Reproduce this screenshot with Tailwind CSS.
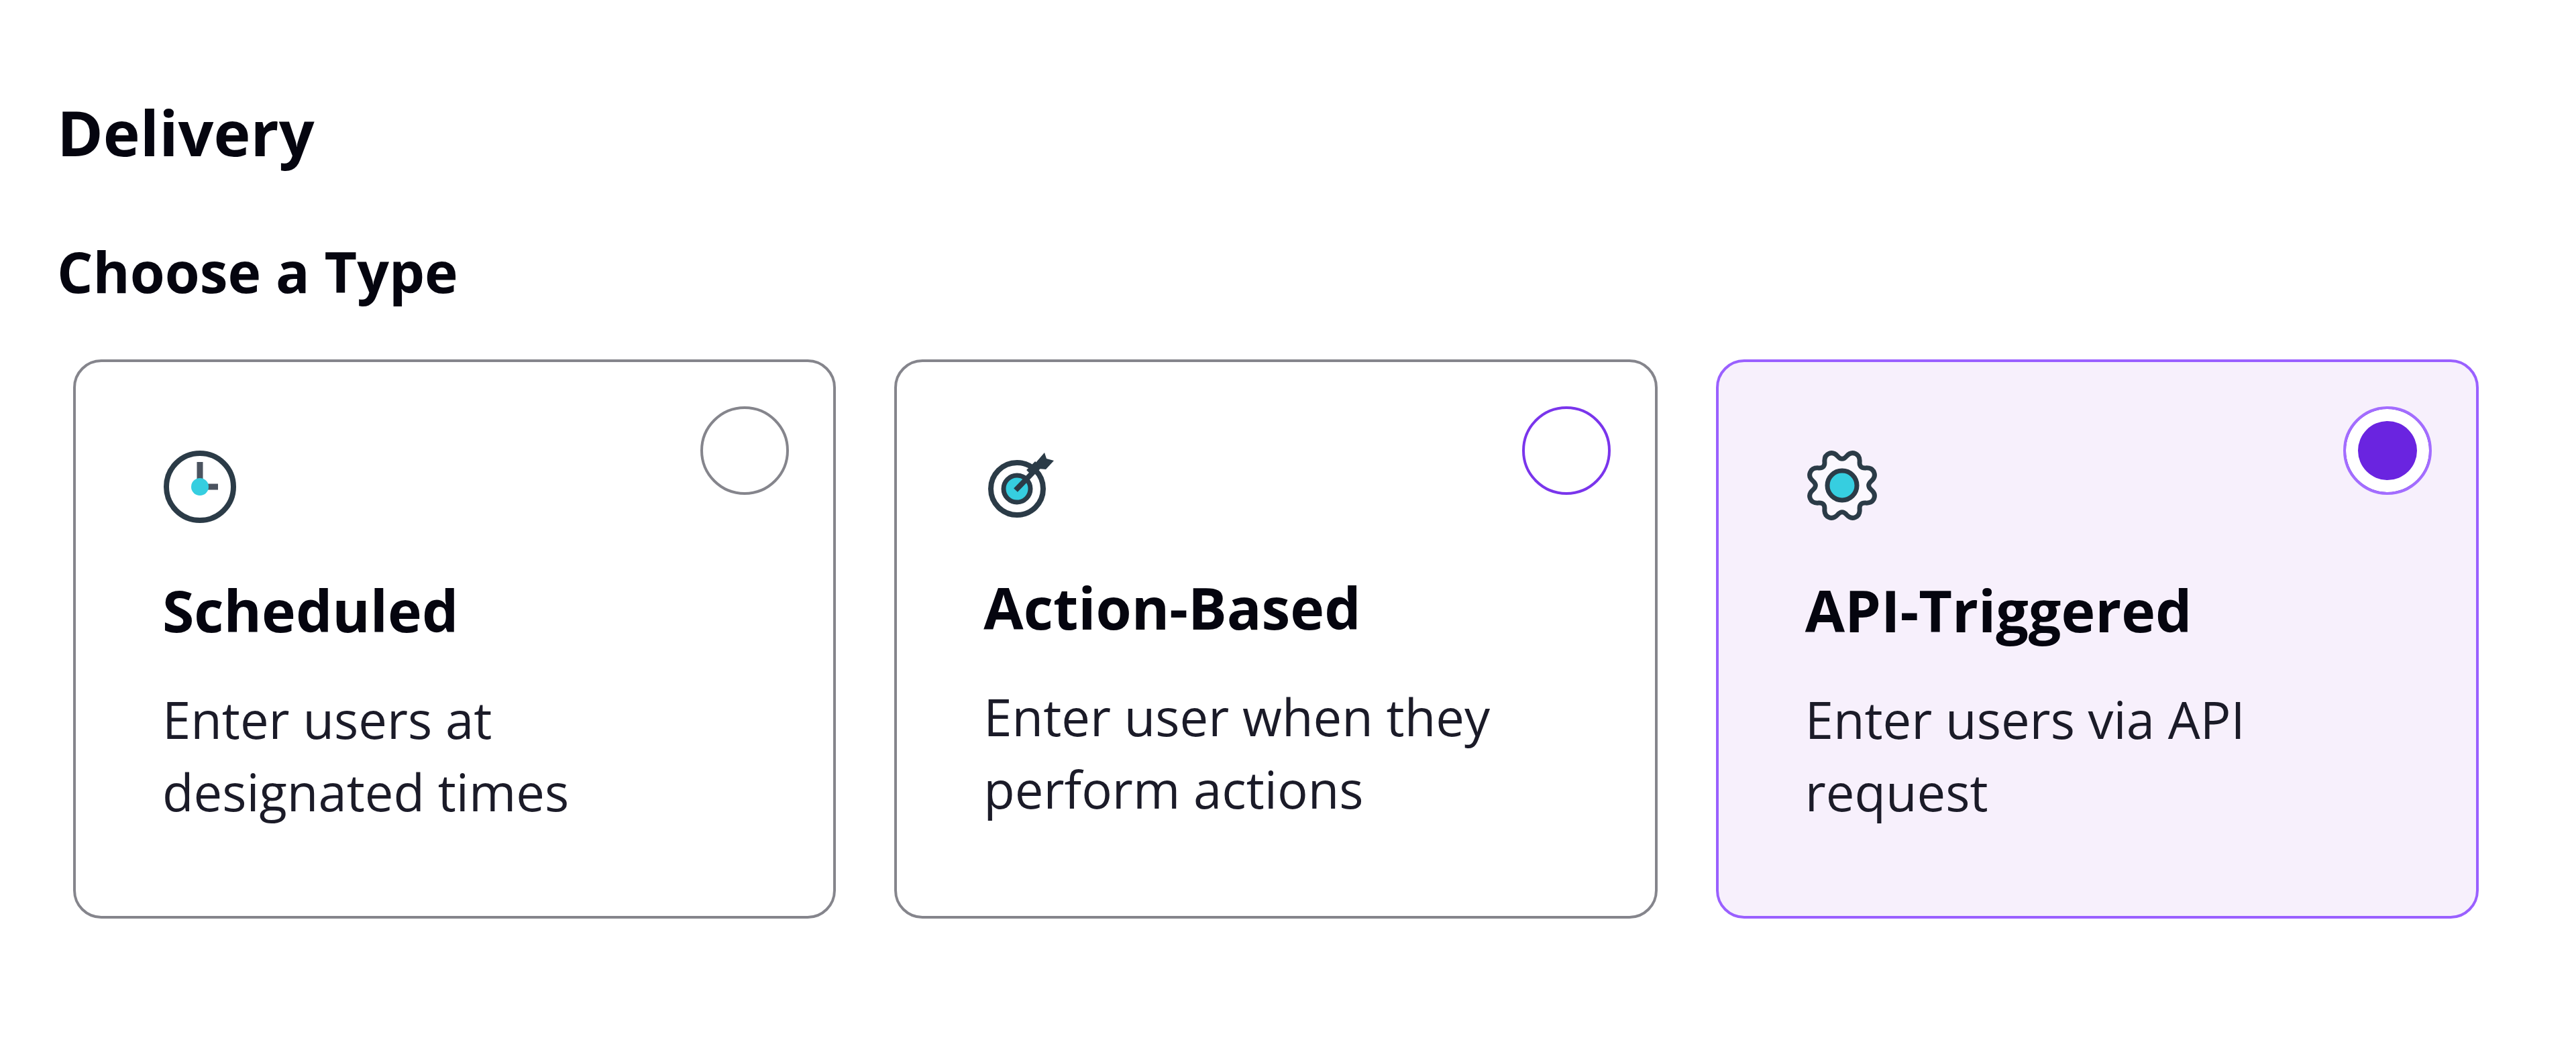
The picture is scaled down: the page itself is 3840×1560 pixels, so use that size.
<!DOCTYPE html>
<html lang="en">
<head>
    <meta charset="UTF-8">
    <meta name="viewport" content="width=device-width, initial-scale=1.0">
    <title>Delivery</title>
    <script src="https://cdn.jsdelivr.net/npm/@tailwindcss/browser@4"></script>
</head>
<body class="bg-white text-[#05050f] font-['Open_Sans',sans-serif]">
    <main class="pt-[137px] pl-[85px] pr-[145px] pb-[188px]">
        <h1 class="text-[93px] leading-[120px] font-bold">Delivery</h1>
        <h2 id="type-heading" class="mt-[94px] text-[84px] leading-[108px] font-bold">Choose a Type</h2>

        <div role="radiogroup" aria-labelledby="type-heading" class="mt-[77px] ml-[24px] grid grid-cols-3 gap-[87px]">
            <!-- Scheduled -->
            <label class="relative block rounded-[42px] border-4 border-[#85858c] py-[131px] px-[129px] cursor-pointer">
                <input type="radio" name="delivery-type" value="scheduled" class="absolute top-[66px] right-[66px] size-[132px] appearance-none rounded-full border-4 border-[#85858c] bg-white">
                <svg class="size-[110px]" viewBox="0 0 110 110" fill="none" aria-hidden="true">
                    <circle cx="56" cy="55" r="50" stroke="#2b3b47" stroke-width="8"/>
                    <path d="M56 18v37h27" stroke="#4b535f" stroke-width="9"/>
                    <circle cx="56" cy="55" r="13" fill="#36cee0"/>
                </svg>
                <h3 class="mt-[75px] text-[86px] leading-[108px] font-bold">Scheduled</h3>
                <p class="mt-[55px] text-[76px] leading-[108px] text-[#1b1b28]">Enter users at<br>designated times</p>
            </label>

            <!-- Action-Based -->
            <label class="relative block rounded-[42px] border-4 border-[#85858c] py-[131px] px-[129px] cursor-pointer">
                <input type="radio" name="delivery-type" value="action" class="absolute top-[66px] right-[66px] size-[132px] appearance-none rounded-full border-4 border-[#7a35ec] bg-white">
                <svg class="size-[106px]" viewBox="0 0 106 106" fill="none" aria-hidden="true">
                    <circle cx="50" cy="58" r="39" stroke="#2b3b47" stroke-width="8"/>
                    <circle cx="50" cy="58" r="20" fill="#36cee0" stroke="#2b3b47" stroke-width="7"/>
                    <path d="M48 60 85 22" stroke="#2b3b47" stroke-width="8"/>
                    <path d="M68 34 81 21" stroke="#2b3b47" stroke-width="11"/>
                    <path d="M78 19 91 4l3 9 11 3-12 13-11-1z" fill="#2b3b47"/>
                </svg>
                <h3 class="mt-[75px] text-[86px] leading-[108px] font-bold">Action-Based</h3>
                <p class="mt-[55px] text-[76px] leading-[108px] text-[#1b1b28]">Enter user when they<br>perform actions</p>
            </label>

            <!-- API-Triggered -->
            <label class="relative block rounded-[42px] border-4 border-[#9a60ff] bg-[#f7f0fc] py-[131px] px-[129px] cursor-pointer">
                <input type="radio" name="delivery-type" value="api" checked class="absolute top-[66px] right-[66px] size-[132px] appearance-none rounded-full border-4 border-[#a36dff] bg-white checked:bg-[#6a24e0] checked:shadow-[inset_0_0_0_18px_#fff]">
                <svg class="size-[110px]" viewBox="0 0 110 110" fill="none" aria-hidden="true">
                    <g transform="translate(55 53)" stroke="#2b3b47" stroke-width="7">
                        <path fill="#fbf8fe" d="M-6.3-43.3Q0-36 6.3-43.3Q12.6-50.5 19.7-47.5Q26.8-44.6 26.1-35Q25.5-25.5 35-26.1Q44.6-26.8 47.5-19.7Q50.5-12.6 43.3-6.3Q36 0 43.3 6.3Q50.5 12.6 47.5 19.7Q44.6 26.8 35 26.1Q25.5 25.5 26.1 35Q26.8 44.6 19.7 47.5Q12.6 50.5 6.3 43.3Q0 36-6.3 43.3Q-12.6 50.5-19.7 47.5Q-26.8 44.6-26.1 35Q-25.5 25.5-35 26.1Q-44.6 26.8-47.5 19.7Q-50.5 12.6-43.3 6.3Q-36 0-43.3-6.3Q-50.5-12.6-47.5-19.7Q-44.6-26.8-35-26.1Q-25.5-25.5-26.1-35Q-26.8-44.6-19.7-47.5Q-12.6-50.5-6.3-43.3Z"/>
                        <circle r="22" fill="#36cee0"/>
                    </g>
                </svg>
                <h3 class="mt-[75px] text-[86px] leading-[108px] font-bold">API-Triggered</h3>
                <p class="mt-[55px] text-[76px] leading-[108px] text-[#1b1b28]">Enter users via API<br>request</p>
            </label>
        </div>
    </main>
</body>
</html>
